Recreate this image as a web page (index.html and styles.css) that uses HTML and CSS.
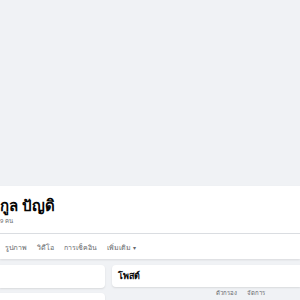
FILE: index.html
```html
<!DOCTYPE html>
<html><head><meta http-equiv="Content-Type" content="text/html; charset=UTF-8">
<link rel="stylesheet" href="styles.css">
</head>
<body>
<div class="cover"></div>

<div class="header">
    <div class="name-block">
        <h1 class="name">กูล ปัญดิ</h1>
        <div class="friends">9 คน</div>
    </div>
    <div class="divider"></div>
    <div class="tabs">
        <span class="tab">รูปภาพ</span>
        <span class="tab">วิดีโอ</span>
        <span class="tab">การเช็คอิน</span>
        <span class="tab">เพิ่มเติม <span class="caret">&#9662;</span></span>
    </div>
</div>

<div class="content">
    <div class="left-col">
        <div class="card card-left"></div>
        <div class="card card-left2"></div>
    </div>
    <div class="right-col">
        <div class="card card-posts">
            <h2 class="posts-title">โพสต์</h2>
        </div>
        <div class="post-tools">
            <span>ตัวกรอง</span>
            <span>จัดการ</span>
        </div>
    </div>
</div>
</body></html>
```

FILE: styles.css
```css
body {
background-color: #f0f2f5;
color: #050505;
font-family: "Noto Sans", "Liberation Sans", sans-serif;
margin: 0;
padding: 0;
overflow: hidden;
}

.cover {
height: 186px;
}

.header {
background-color: #fff;
height: 73px;
box-shadow: 0 1px 2px rgba(0, 0, 0, 0.1);
}

.name-block {
padding-top: 9px;
height: 38px;
}

.name {
font-size: 15px;
font-weight: bold;
margin: 0;
line-height: 21px;
}

.friends {
font-size: 6px;
color: #65676b;
line-height: 10px;
}

.divider {
height: 1px;
background-color: #dadde1;
}

.tabs {
display: flex;
gap: 10px;
padding-left: 5px;
height: 26px;
align-items: center;
}

.tab {
font-size: 7px;
color: #65676b;
}

.caret {
font-size: 6px;
}

.content {
display: flex;
gap: 7px;
padding-top: 6px;
}

.left-col {
width: 105px;
display: flex;
flex-direction: column;
gap: 5px;
}

.right-col {
flex: 1;
}

.card {
background-color: #fff;
border-radius: 4px;
box-shadow: 0 1px 2px rgba(0, 0, 0, 0.1);
}

.card-left {
height: 23px;
border-radius: 0 4px 4px 0;
}

.card-left2 {
height: 20px;
border-radius: 0 4px 4px 0;
}

.card-posts {
height: 22px;
display: flex;
align-items: center;
padding-left: 6px;
border-radius: 4px 0 0 4px;
}

.posts-title {
font-size: 9px;
font-weight: bold;
margin: 0;
}

.post-tools {
display: flex;
gap: 10px;
padding-left: 104px;
padding-top: 2px;
font-size: 6px;
line-height: 9px;
color: #65676b;
}
```
